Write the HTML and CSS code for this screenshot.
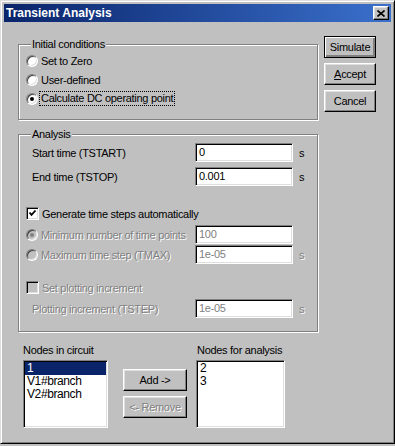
FILE: index.html
```html
<!DOCTYPE html>
<html lang="en">
<head>
  <meta charset="UTF-8" />
  <title>Transient Analysis</title>
  <link rel="stylesheet" href="styles.css">
</head>
<body>
  <div class="window">
    <div class="titlebar">
      <span class="title">Transient Analysis</span>
      <span class="close">
        <svg width="8" height="7" viewBox="0 0 8 7"><path d="M0.5 0.5 L7.5 6.5 M7.5 0.5 L0.5 6.5" stroke="#000" stroke-width="1.6" fill="none"/></svg>
      </span>
    </div>

    <div class="content">
      <div class="main">
        <fieldset class="group init">
          <legend>Initial conditions</legend>
          <div class="opt"><span class="radio"></span>Set to Zero</div>
          <div class="opt"><span class="radio"></span>User-defined</div>
          <div class="opt"><span class="radio on"></span><span class="focus">Calculate DC operating point</span></div>
        </fieldset>

        <fieldset class="group analysis">
          <legend>Analysis</legend>
          <div class="field">
            <span class="flabel">Start time (TSTART)</span>
            <span class="edit">0</span>
            <span class="unit">s</span>
          </div>
          <div class="field gap">
            <span class="flabel">End time (TSTOP)</span>
            <span class="edit">0.001</span>
            <span class="unit">s</span>
          </div>

          <div class="opt check-row"><span class="check on"><svg width="9" height="9" viewBox="0 0 9 9"><path d="M1.5 3.5 L3.5 5.8 L7.5 1.5" stroke="#000" stroke-width="1.8" fill="none"/></svg></span>Generate time steps automatically</div>

          <div class="field dis first-radio">
            <span class="flabel rlabel"><span class="radio off on"></span>Minimum number of time points</span>
            <span class="edit">100</span>
          </div>
          <div class="field dis tight">
            <span class="flabel rlabel"><span class="radio off"></span>Maximum time step (TMAX)</span>
            <span class="edit">1e-05</span>
            <span class="unit">s</span>
          </div>

          <div class="opt check-row plot dis"><span class="check off"></span>Set plotting increment</div>

          <div class="field dis gap">
            <span class="flabel">Plotting increment (TSTEP)</span>
            <span class="edit">1e-05</span>
            <span class="unit">s</span>
          </div>
        </fieldset>

        <div class="nodes">
          <div class="list-col">
            <div class="list-label">Nodes in circuit</div>
            <div class="listbox">
              <div class="item sel">1</div>
              <div class="item">V1#branch</div>
              <div class="item">V2#branch</div>
            </div>
          </div>
          <div class="move-col">
            <div class="btn">Add -&gt;</div>
            <div class="btn dis">&lt;- Remove</div>
          </div>
          <div class="list-col">
            <div class="list-label">Nodes for analysis</div>
            <div class="listbox wide">
              <div class="item">2</div>
              <div class="item">3</div>
            </div>
          </div>
        </div>
      </div>

      <div class="actions">
        <div class="btn default">Simulate</div>
        <div class="btn"><u>A</u>ccept</div>
        <div class="btn">Cancel</div>
      </div>
    </div>
  </div>
</body>
</html>
```

FILE: styles.css
```css
* { box-sizing: border-box; }
body {
  margin: 0;
  background: #c0c0c0;
  font-family: 'Liberation Sans', Arial, sans-serif;
  font-size: 11px;
  letter-spacing: -0.3px;
  color: #000;
}
.window {
  width: 395px; height: 444px;
  border: 1px solid; border-color: #dfdfdf #000 #000 #dfdfdf;
  box-shadow: inset 1px 1px #fff, inset -1px -1px #808080;
  padding: 3px;
  background: #c0c0c0;
}
.titlebar {
  height: 18px;
  background: linear-gradient(to right, #0a246a, #3a70cc);
  display: flex; align-items: center; justify-content: space-between;
  padding: 0 2px 0 2px;
}
.title { color: #fff; font-weight: bold; font-size: 12px; letter-spacing: 0; }
.close {
  width: 16px; height: 14px;
  background: #c0c0c0;
  border: 1px solid; border-color: #fff #000 #000 #fff;
  box-shadow: inset -1px -1px #808080, inset 1px 1px #dfdfdf;
  display: flex; align-items: center; justify-content: center;
}
.content { display: flex; padding-left: 14px; }
.main { width: 300px; }
.actions {
  margin-left: 6px; padding-top: 14px;
  display: flex; flex-direction: column; gap: 5px;
}

/* group boxes */
.group {
  margin: 0; min-width: 0;
  border: 1px solid #808080;
  box-shadow: 1px 1px 0 #fff, inset 1px 1px 0 #fff;
}
.group legend {
  padding: 0 1px; margin-left: 6px;
  line-height: 13px; background: #c0c0c0;
}
.init { margin-top: 16px; padding: 3px 6px 14px 6px; }
.init .opt + .opt { margin-top: 6px; }
.analysis { margin-top: 8px; padding: 2px 6px 13px 6px; }

/* radios and checkboxes */
.opt { display: flex; align-items: center; height: 13px; }
.radio {
  position: relative;
  width: 12px; height: 12px; margin: 0 3px 0 1px;
  border-radius: 50%; background: #fff;
  border: 1px solid; border-color: #808080 #fff #fff #808080;
  box-shadow: inset 1px 1px #404040, inset -1px -1px #dfdfdf;
  flex: none;
}
.radio.on::after {
  content: ''; position: absolute; left: 3px; top: 3px;
  width: 4px; height: 4px; border-radius: 50%; background: #000;
}
.radio.off { background: #c0c0c0; }
.radio.off.on::after { background: #808080; }
.focus { border: 1px dotted #000; padding: 0 1px; line-height: 13px; margin-left: -2px; }
.check {
  width: 13px; height: 13px; margin: 0 3px 0 1px;
  background: #fff;
  border: 1px solid; border-color: #808080 #fff #fff #808080;
  box-shadow: inset 1px 1px #000, inset -1px -1px #dfdfdf;
  display: flex; align-items: center; justify-content: center;
  flex: none;
}
.check.off { background: #c0c0c0; }

/* edit rows */
.field { display: flex; align-items: center; height: 19px; }
.flabel { width: 170px; padding-left: 7px; white-space: nowrap; display: flex; align-items: center; }
.rlabel { padding-left: 0; }
.edit {
  width: 98px; height: 19px;
  background: #fff;
  border: 1px solid; border-color: #808080 #fff #fff #808080;
  box-shadow: inset 1px 1px #000, inset -1px -1px #dfdfdf;
  padding-left: 3px; line-height: 17px;
}
.unit { margin-left: 6px; }
.gap { margin-top: 5px; }
.check-row { margin-top: 21px; }
.first-radio { margin-top: 5px; }
.tight { margin-top: 1px; }
.plot { margin-top: 17px; }
.dis { color: #808080; }
.dis .flabel, .dis .unit, .opt.dis, .btn.dis { text-shadow: 1px 1px 0 #fff; }
.dis .edit { color: #808080; }

/* buttons */
.btn {
  width: 52px; height: 22px;
  background: #c0c0c0;
  border: 1px solid; border-color: #fff #000 #000 #fff;
  box-shadow: inset -1px -1px #808080, inset 1px 1px #dfdfdf;
  display: flex; align-items: center; justify-content: center;
}
.btn.default {
  border-color: #000;
  box-shadow: inset 1px 1px #fff, inset -1px -1px #808080, inset -2px -2px #808080;
}
.btn.dis { color: #808080; }

/* node lists */
.nodes { display: flex; padding-left: 5px; margin-top: 12px; }
.list-label { line-height: 13px; margin-bottom: 3px; }
.listbox {
  width: 85px; height: 68px;
  background: #fff;
  border: 1px solid; border-color: #808080 #fff #fff #808080;
  box-shadow: inset 1px 1px #000, inset -1px -1px #dfdfdf;
  padding: 1px;
}
.listbox.wide { width: 89px; margin-left: -1px; }
.item { height: 13px; line-height: 13px; padding-left: 2px; font-size: 12px; letter-spacing: -0.4px; }
.item.sel { background: #0a246a; color: #fff; }
.move-col {
  margin: 0 10px 0 15px; padding-top: 25px;
  display: flex; flex-direction: column; gap: 5px;
}
.move-col .btn { width: 64px; }
```
